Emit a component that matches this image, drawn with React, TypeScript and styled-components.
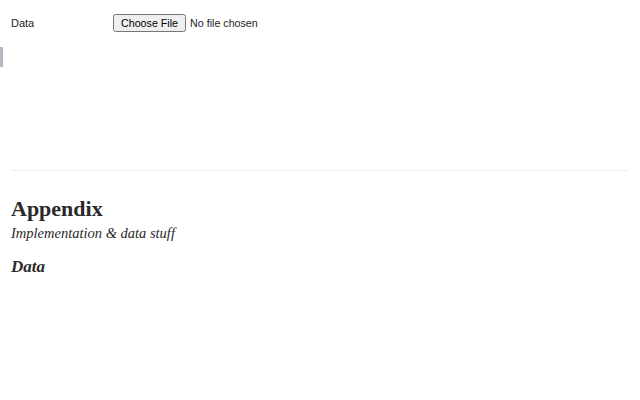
import styled, { createGlobalStyle } from "styled-components";

const Global = createGlobalStyle`
  html, body {
    margin: 0;
    padding: 0;
    background: #fff;
  }
  body {
    font-family: "Liberation Serif", serif;
    color: #1b1e23;
  }
`;

const Notebook = styled.div`
  display: flex;
  flex-direction: column;
  width: 640px;
  height: 400px;
  overflow: hidden;
`;

const InputCell = styled.div`
  padding: 14px 12px 0 11px;
  height: 33px;
  box-sizing: border-box;
`;

const FormRow = styled.form`
  display: flex;
  align-items: center;
  font: 11px "Liberation Sans", Arial, sans-serif;
  color: #1b1e23;
`;

const FieldLabel = styled.label`
  width: 102px;
`;

const FileInput = styled.input`
  font: 10.7px "Liberation Sans", Arial, sans-serif;
  margin: 0;
`;

const Pending = styled.div`
  margin-top: 14px;
  height: 20px;
  width: 3px;
  background: #b3b8c3;
`;

const Spacer = styled.div`
  height: 103px;
`;

const Rule = styled.hr`
  margin: 0 12px 0 11px;
  border: none;
  border-top: 1px solid #eeeeee;
`;

const Section = styled.div`
  padding: 25px 12px 0 11px;
`;

const Title = styled.h1`
  margin: 0;
  font-size: 22px;
  font-weight: 700;
  line-height: 26px;
  color: #2a2a2a;
`;

const Subtitle = styled.p`
  margin: 2px 0 0;
  font-size: 14.5px;
  font-style: italic;
  line-height: 18px;
  color: #2a2a2a;
`;

const SubHeading = styled.h2`
  margin: 14px 0 0;
  font-size: 17px;
  font-style: italic;
  font-weight: 700;
  line-height: 22px;
  color: #2a2a2a;
`;

export default function App() {
  return (
    <Notebook>
      <Global />
      <InputCell>
        <FormRow>
          <FieldLabel>Data</FieldLabel>
          <FileInput type="file" />
        </FormRow>
      </InputCell>
      <Pending />
      <Spacer />
      <Rule />
      <Section>
        <Title>Appendix</Title>
        <Subtitle>Implementation &amp; data stuff</Subtitle>
        <SubHeading>Data</SubHeading>
      </Section>
    </Notebook>
  );
}
